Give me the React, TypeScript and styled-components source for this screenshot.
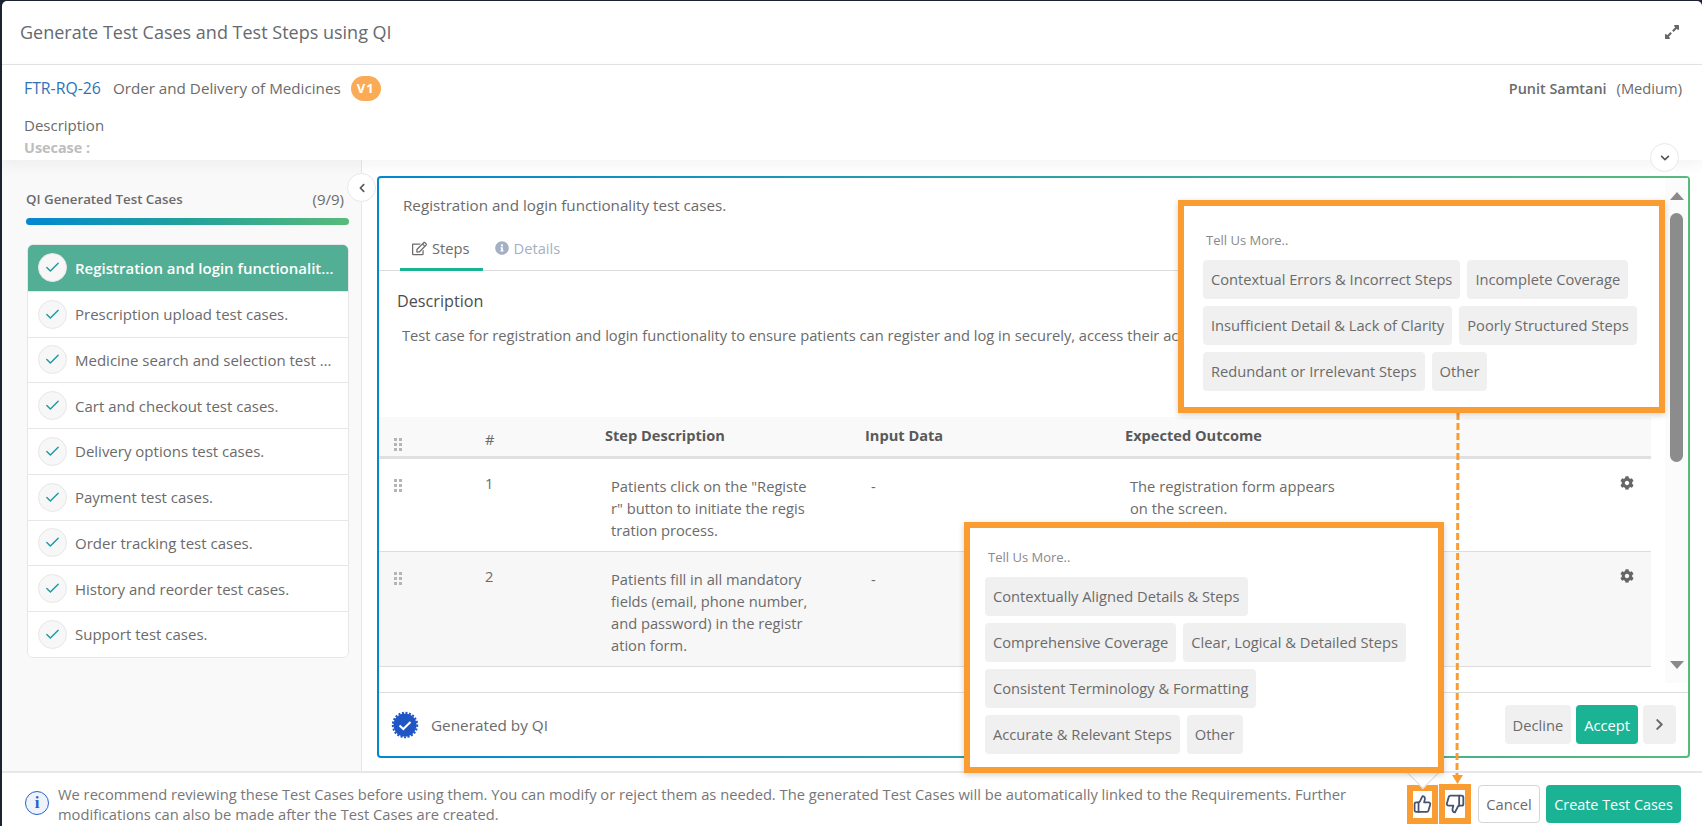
import styled, { createGlobalStyle } from "styled-components";
import { Check, ThumbsDown, ThumbsUp } from "lucide-react";
import { FaChevronDown, FaChevronLeft, FaChevronRight, FaCog, FaExpandAlt, FaInfoCircle, FaRegEdit } from "react-icons/fa";

const ORANGE = "#f99d33";

const GlobalStyle = createGlobalStyle`
    html, body { margin: 0; padding: 0; background: #1b2230; }
    body { font-family: "Open Sans", "Noto Sans", sans-serif; font-size: 14.7px; color: #6b6b6b; }
    * { box-sizing: border-box; }
`;

const Page = styled.div`
    position: relative;
    width: 1702px;
    height: 826px;
    overflow: hidden;
    padding: 1px 0 0 2px;
`;
const Modal = styled.div`
    display: flex;
    flex-direction: column;
    height: 825px;
    background: #fff;
    border-radius: 5px 5px 0 0;
`;
const Header = styled.header`
    display: flex;
    align-items: center;
    justify-content: space-between;
    height: 64px;
    padding: 0 22px 2px 18px;
    border-bottom: 1px solid #e4e4e4;
    flex: none;
`;
const Title = styled.h1`
    margin: 0;
    font-size: 18px;
    font-weight: 500;
    color: #666a6e;
`;
const Meta = styled.section`
    position: relative;
    z-index: 2;
    flex: none;
    height: 95px;
    padding: 10px 20px 0 22px;
    background: #fff;
    box-shadow: 0 5px 12px rgba(60, 70, 90, 0.06);
`;
const MetaRow = styled.div`
    display: flex;
    align-items: center;
    height: 26px;
`;
const ReqId = styled.span`
    font-size: 15.8px;
    color: #2f73b5;
    margin-right: 12px;
`;
const ReqName = styled.span`
    font-size: 15.2px;
`;
const VersionBadge = styled.span`
    display: inline-flex;
    align-items: center;
    justify-content: center;
    width: 30px;
    height: 25px;
    margin-left: 10px;
    border-radius: 13px;
    background: #fbab55;
    color: #fff;
    font-size: 13px;
    font-weight: 700;
    letter-spacing: 1px;
`;
const Owner = styled.span`
    margin-left: auto;
    font-size: 14.4px;
    font-weight: 600;
`;
const Priority = styled.span`
    margin-left: 10px;
`;
const MetaLabel = styled.div`
    margin-top: 14px;
    font-size: 15px;
    line-height: 20px;
    font-weight: 500;
`;
const Usecase = styled.div`
    margin-top: 2px;
    font-size: 14.4px;
    line-height: 22px;
    font-weight: 700;
    color: #bdbdbd;
`;
const RoundToggle = styled.button`
    position: absolute;
    display: flex;
    align-items: center;
    justify-content: center;
    width: 29px;
    height: 29px;
    padding: 0;
    border: 1px solid #e8e8e8;
    border-radius: 50%;
    background: #fff;
    color: #555;
    z-index: 3;
`;
const MetaToggle = styled(RoundToggle)`
    right: 23px;
    bottom: -12px;
`;
const Body = styled.div`
    display: flex;
    flex: 1;
    min-height: 0;
`;
const Sidebar = styled.aside`
    position: relative;
    flex: none;
    width: 360px;
    padding: 30px 12px 0 24px;
    background: #f9f9f9;
    border-right: 1px solid #e7e7e7;
`;
const SideToggle = styled(RoundToggle)`
    right: -15px;
    top: 13px;
`;
const SideHead = styled.div`
    display: flex;
    justify-content: space-between;
    line-height: 18px;
    font-size: 13.3px;
    font-weight: 600;
    padding-right: 5px;
`;
const SideCount = styled.span`
    font-size: 15px;
    font-weight: 400;
`;
const Progress = styled.div`
    height: 7px;
    margin-top: 10px;
    border-radius: 4px;
    background: linear-gradient(90deg, #0288d1, #22a19a 50%, #57bb7a);
`;
const CaseList = styled.ul`
    margin: 19px 0 0 1px;
    padding: 0;
    list-style: none;
    background: #fff;
    border: 1px solid #e7e7e7;
    border-radius: 6px;
    overflow: hidden;
`;
const CaseItem = styled.li<{ $active?: boolean }>`
    display: flex;
    align-items: center;
    gap: 8px;
    height: 45.75px;
    padding: 0 13px 0 10px;
    font-size: 15px;
    font-weight: ${(p) => (p.$active ? 600 : 500)};
    color: ${(p) => (p.$active ? "#fff" : "#6b6b6b")};
    background: ${(p) => (p.$active ? "#52ae94" : "#fff")};
    border-top: ${(p) => (p.$active ? "none" : "1px solid #e7e7e7")};
    white-space: nowrap;
`;
const CaseName = styled.span`
    overflow: hidden;
    text-overflow: ellipsis;
`;
const CheckCircle = styled.span`
    display: flex;
    flex: none;
    align-items: center;
    justify-content: center;
    width: 29px;
    height: 29px;
    border-radius: 50%;
    background: #f7f7f7;
    border: 1px solid #e7e7e7;
    color: #1b9aa0;
`;
const Main = styled.main`
    flex: 1;
    min-width: 0;
    padding: 16px 12px 13px 15px;
`;
const Card = styled.div`
    display: flex;
    flex-direction: column;
    height: 100%;
    border: 2px solid transparent;
    border-radius: 4px;
    background: linear-gradient(#fff, #fff) padding-box, linear-gradient(90deg, #0288d1, #57bb7a) border-box;
`;
const CardBody = styled.div`
    display: flex;
    flex: 1;
    min-height: 0;
`;
const CardScroll = styled.div`
    flex: 1;
    min-width: 0;
    padding: 17px 14px 0 0;
    overflow: hidden;
`;
const CaseTitle = styled.div`
    padding-left: 24px;
    font-size: 15.2px;
    line-height: 20px;
    font-weight: 500;
`;
const Tabs = styled.div`
    display: flex;
    height: 43px;
    margin-top: 13px;
    padding-left: 21px;
    margin-right: -14px;
    border-bottom: 1px solid #ddd;
`;
const Tab = styled.div<{ $active?: boolean }>`
    display: flex;
    align-items: center;
    gap: 5px;
    height: 43px;
    padding: 0 13px 0 12px;
    color: ${(p) => (p.$active ? "#6b6b6b" : "#a6b0c4")};
    border-bottom: 3px solid ${(p) => (p.$active ? "#1ab394" : "transparent")};
`;
const DescTitle = styled.h2`
    margin: 20px 0 0 18px;
    font-size: 16.2px;
    line-height: 20px;
    font-weight: 500;
    color: #4d4d4d;
`;
const DescText = styled.p`
    max-width: 776px;
    margin: 14px 0 0 23px;
    font-size: 14.7px;
    line-height: 20px;
    white-space: nowrap;
    overflow: hidden;
`;
const TableRow = styled.div<{ $head?: boolean; $shade?: boolean }>`
    display: grid;
    grid-template-columns: 106px 120px 260px 260px 1fr 31px;
    min-height: ${(p) => (p.$head ? "42px" : "0")};
    background: ${(p) => (p.$head ? "#f9f9f9" : p.$shade ? "#f7f7f7" : "#fff")};
    border-bottom: ${(p) => (p.$head ? "3px solid #e0e0e0" : "1px solid #ddd")};
`;
const TableHead = styled.div`
    margin-top: 72px;
`;
const GripCell = styled.div<{ $head?: boolean }>`
    padding: ${(p) => (p.$head ? "18px" : "17px")} 0 0 15px;
    color: #b5b5b5;
`;
const NumCell = styled.div<{ $head?: boolean }>`
    padding-top: ${(p) => (p.$head ? "12px" : "14px")};
    line-height: 20px;
`;
const HeadCell = styled.div`
    padding-top: 8px;
    font-size: 14.6px;
    line-height: 20px;
    font-weight: 700;
    color: #595959;
`;
const Cell = styled.div<{ $indent?: number }>`
    padding: 16px 0 10px ${(p) => p.$indent ?? 6}px;
    line-height: 22px;
`;
const GearCell = styled.div`
    padding-top: 15px;
    color: #666;
`;
const ScrollTrack = styled.div`
    display: flex;
    flex: none;
    flex-direction: column;
    align-items: center;
    width: 23px;
    margin-bottom: 9px;
    padding: 14px 0;
    background: #fbfbfb;
    justify-content: space-between;
`;
const ScrollArrow = styled.span<{ $down?: boolean }>`
    width: 0;
    height: 0;
    border-left: 7px solid transparent;
    border-right: 7px solid transparent;
    ${(p) => (p.$down ? "border-top: 8px solid #8a8a8a;" : "border-bottom: 8px solid #8a8a8a;")}
`;
const ScrollThumb = styled.span`
    width: 13px;
    height: 249px;
    margin: 13px 0 auto;
    border-radius: 7px;
    background: #8c8c8c;
`;
const CardFooter = styled.div`
    display: flex;
    flex: none;
    align-items: center;
    gap: 5px;
    height: 64px;
    padding: 0 12px;
    border-top: 1px solid #ddd;
`;
const GeneratedBy = styled.span`
    margin-left: 7px;
    margin-right: auto;
    font-size: 15.3px;
    font-weight: 500;
`;
const Button = styled.button<{ $variant?: "primary" | "plain" | "outline"; $short?: boolean; $icon?: boolean }>`
    flex: none;
    height: ${(p) => (p.$short ? "38px" : "39px")};
    padding: 0 ${(p) => (p.$icon ? "10px" : "8px")};
    border-radius: 4px;
    font: inherit;
    white-space: nowrap;
    font-weight: ${(p) => (p.$variant === "primary" ? 500 : 400)};
    color: ${(p) => (p.$variant === "primary" ? "#fff" : "#6b6b6b")};
    background: ${(p) => (p.$variant === "primary" ? "#1ab394" : p.$variant === "outline" ? "#fff" : "#f0f0f0")};
    border: ${(p) => (p.$variant === "outline" ? "1px solid #d5d5d5" : "none")};
`;
const Footer = styled.footer`
    display: flex;
    flex: none;
    align-items: center;
    height: 55px;
    padding: 9px 21px 0 23px;
    border-top: 2px solid #e7e7e7;
    background: #fff;
`;
const InfoRound = styled.span`
    display: flex;
    flex: none;
    align-items: center;
    justify-content: center;
    width: 24px;
    height: 24px;
    margin-bottom: 3px;
    border: 1.5px solid #2a62c8;
    border-radius: 50%;
    background: #eef3fb;
    color: #2a62c8;
    font-family: "Liberation Serif", serif;
    font-size: 17px;
    font-weight: 700;
`;
const Notice = styled.p`
    flex: none;
    width: 1349px;
    margin: 0 0 0 9px;
    line-height: 20px;
    color: #777;
`;
const Vote = styled.span<{ $w: number; $h: number }>`
    display: flex;
    flex: none;
    align-items: center;
    justify-content: center;
    width: ${(p) => p.$w}px;
    height: ${(p) => p.$h}px;
    margin-right: 1px;
    border: 6px solid ${ORANGE};
    background: #fff;
    color: #44536f;
`;
const FooterActions = styled.div`
    display: flex;
    align-items: center;
    margin-left: auto;
    gap: 6px;
`;
const Votes = styled.div`
    display: flex;
    align-items: center;
`;
const Popover = styled.div<{ $left: number; $top: number; $width: number; $height: number; $padTop: number; $padLeft: number }>`
    position: absolute;
    left: ${(p) => p.$left}px;
    top: ${(p) => p.$top}px;
    width: ${(p) => p.$width}px;
    height: ${(p) => p.$height}px;
    padding: ${(p) => p.$padTop}px 12px 0 ${(p) => p.$padLeft}px;
    border: 6px solid ${ORANGE};
    background: #fff;
    box-shadow: 0 2px 6px rgba(0, 0, 0, 0.18);
    z-index: 6;
`;
const PopoverLabel = styled.div`
    padding-left: 3px;
    font-size: 13px;
    line-height: 18px;
    color: #8a8a8a;
`;
const Chips = styled.div`
    display: flex;
    flex-wrap: wrap;
    gap: 7.5px 7px;
    margin-top: 11px;
`;
const Chip = styled.span`
    height: 38.5px;
    padding: 0 8px;
    line-height: 38px;
    border-radius: 4px;
    background: #f0f0f0;
    white-space: nowrap;
`;
const Tail = styled.span`
    position: absolute;
    left: 1411px;
    top: 760px;
    width: 24px;
    height: 24px;
    transform: rotate(45deg);
    background: #fff;
    border-right: 1px solid #ddd;
    border-bottom: 1px solid #ddd;
    z-index: 5;
`;
const Connector = styled.svg`
    position: absolute;
    left: 1450px;
    top: 413px;
    z-index: 4;
`;
const CreateButton = styled(Button)`
    width: 135px;
    padding: 0;
    font-size: 14.4px;
`;
const CancelButton = styled(Button)`
    width: 62px;
    padding: 0;
`;

const cases = [
    "Registration and login functionality test cases.",
    "Prescription upload test cases.",
    "Medicine search and selection test cases.",
    "Cart and checkout test cases.",
    "Delivery options test cases.",
    "Payment test cases.",
    "Order tracking test cases.",
    "History and reorder test cases.",
    "Support test cases.",
];

const steps = [
    {
        id: 1,
        text: ["Patients click on the \"Registe", "r\" button to initiate the regis", "tration process."],
        outcome: ["The registration form appears", "on the screen."],
    },
    {
        id: 2,
        text: ["Patients fill in all mandatory", "fields (email, phone number,", "and password) in the registr", "ation form."],
        outcome: [],
    },
];

const dislikeReasons = [
    "Contextual Errors & Incorrect Steps",
    "Incomplete Coverage",
    "Insufficient Detail & Lack of Clarity",
    "Poorly Structured Steps",
    "Redundant or Irrelevant Steps",
    "Other",
];

const likeReasons = [
    "Contextually Aligned Details & Steps",
    "Comprehensive Coverage",
    "Clear, Logical & Detailed Steps",
    "Consistent Terminology & Formatting",
    "Accurate & Relevant Steps",
    "Other",
];

const Grip = () => (
    <svg width="9" height="13" viewBox="0 0 9 13" fill="currentColor">
        {[0, 5].map((x) => [0, 5, 10].map((y) => <rect key={`${x}-${y}`} x={x} y={y} width="3" height="3" />))}
    </svg>
);

const VerifiedBadge = () => (
    <svg width="28" height="28" viewBox="0 0 28 28">
        <circle cx="14" cy="14" r="11.5" fill="#1f55c4" />
        <circle cx="14" cy="14" r="12.2" fill="none" stroke="#1f55c4" strokeWidth="2" strokeDasharray="2 1.6" />
        <path d="M8.5 14.5l3.8 3.5 7.2-7" fill="none" stroke="#fff" strokeWidth="2" />
    </svg>
);

const Lines = ({ lines }: { lines: string[] }) => (
    <>
        {lines.map((line) => (
            <div key={line}>{line}</div>
        ))}
    </>
);

export default function App() {
    return (
        <Page>
            <GlobalStyle />
            <Modal>
                <Header>
                    <Title>Generate Test Cases and Test Steps using QI</Title>
                    <FaExpandAlt size={16} color="#666" />
                </Header>
                <Meta>
                    <MetaRow>
                        <ReqId>FTR-RQ-26</ReqId>
                        <ReqName>Order and Delivery of Medicines</ReqName>
                        <VersionBadge>V1</VersionBadge>
                        <Owner>Punit Samtani</Owner>
                        <Priority>(Medium)</Priority>
                    </MetaRow>
                    <MetaLabel>Description</MetaLabel>
                    <Usecase>Usecase :</Usecase>
                    <MetaToggle>
                        <FaChevronDown size={10} />
                    </MetaToggle>
                </Meta>
                <Body>
                    <Sidebar>
                        <SideToggle>
                            <FaChevronLeft size={10} />
                        </SideToggle>
                        <SideHead>
                            <span>QI Generated Test Cases</span>
                            <SideCount>(9/9)</SideCount>
                        </SideHead>
                        <Progress />
                        <CaseList>
                            {cases.map((name, i) => (
                                <CaseItem key={name} $active={i === 0}>
                                    <CheckCircle>
                                        <Check size={17} strokeWidth={2} />
                                    </CheckCircle>
                                    <CaseName>{name}</CaseName>
                                </CaseItem>
                            ))}
                        </CaseList>
                    </Sidebar>
                    <Main>
                        <Card>
                            <CardBody>
                                <CardScroll>
                                    <CaseTitle>Registration and login functionality test cases.</CaseTitle>
                                    <Tabs>
                                        <Tab $active>
                                            <FaRegEdit size={15} />
                                            Steps
                                        </Tab>
                                        <Tab>
                                            <FaInfoCircle size={14} />
                                            Details
                                        </Tab>
                                    </Tabs>
                                    <DescTitle>Description</DescTitle>
                                    <DescText>
                                        Test case for registration and login functionality to ensure patients can register and log in securely, access their account and manage their profile details.
                                    </DescText>
                                    <TableHead>
                                        <TableRow $head>
                                            <GripCell $head>
                                                <Grip />
                                            </GripCell>
                                            <NumCell $head>#</NumCell>
                                            <HeadCell>Step Description</HeadCell>
                                            <HeadCell>Input Data</HeadCell>
                                            <HeadCell>Expected Outcome</HeadCell>
                                            <div />
                                        </TableRow>
                                    </TableHead>
                                    {steps.map((step) => (
                                        <TableRow key={step.id} $shade={step.id === 2}>
                                            <GripCell>
                                                <Grip />
                                            </GripCell>
                                            <NumCell>{step.id}</NumCell>
                                            <Cell>
                                                <Lines lines={step.text} />
                                            </Cell>
                                            <Cell $indent={6}>-</Cell>
                                            <Cell $indent={5}>
                                                <Lines lines={step.outcome} />
                                            </Cell>
                                            <GearCell>
                                                <FaCog size={14} />
                                            </GearCell>
                                        </TableRow>
                                    ))}
                                </CardScroll>
                                <ScrollTrack>
                                    <ScrollArrow />
                                    <ScrollThumb />
                                    <ScrollArrow $down />
                                </ScrollTrack>
                            </CardBody>
                            <CardFooter>
                                <VerifiedBadge />
                                <GeneratedBy>Generated by QI</GeneratedBy>
                                <Button>Decline</Button>
                                <Button $variant="primary">Accept</Button>
                                <Button $icon>
                                    <FaChevronRight size={13} />
                                </Button>
                            </CardFooter>
                        </Card>
                    </Main>
                </Body>
                <Footer>
                    <InfoRound>i</InfoRound>
                    <Notice>
                        We recommend reviewing these Test Cases before using them. You can modify or reject them as needed. The generated Test Cases will be automatically linked to the Requirements. Further modifications can also be made after the Test Cases are created.
                    </Notice>
                    <FooterActions>
                        <Votes>
                            <Vote $w={31} $h={39}>
                                <ThumbsUp size={20} strokeWidth={2.2} />
                            </Vote>
                            <Vote $w={32} $h={40}>
                                <ThumbsDown size={20} strokeWidth={2.2} />
                            </Vote>
                        </Votes>
                        <CancelButton $variant="outline" $short>Cancel</CancelButton>
                        <CreateButton $variant="primary" $short>Create Test Cases</CreateButton>
                    </FooterActions>
                </Footer>
            </Modal>
            <Popover $left={1178} $top={200} $width={487} $height={213} $padTop={25} $padLeft={19}>
                <PopoverLabel>Tell Us More..</PopoverLabel>
                <Chips>
                    {dislikeReasons.map((reason) => (
                        <Chip key={reason}>{reason}</Chip>
                    ))}
                </Chips>
            </Popover>
            <Popover $left={964} $top={522} $width={480} $height={251} $padTop={20} $padLeft={15}>
                <PopoverLabel>Tell Us More..</PopoverLabel>
                <Chips>
                    {likeReasons.map((reason) => (
                        <Chip key={reason}>{reason}</Chip>
                    ))}
                </Chips>
            </Popover>
            <Tail />
            <Connector width="16" height="372" viewBox="0 0 16 372">
                <line x1="8" y1="0" x2="7" y2="362" stroke={ORANGE} strokeWidth="3" strokeDasharray="7 3" />
                <path d="M2 362h11l-5.5 9z" fill={ORANGE} />
            </Connector>
        </Page>
    );
}
